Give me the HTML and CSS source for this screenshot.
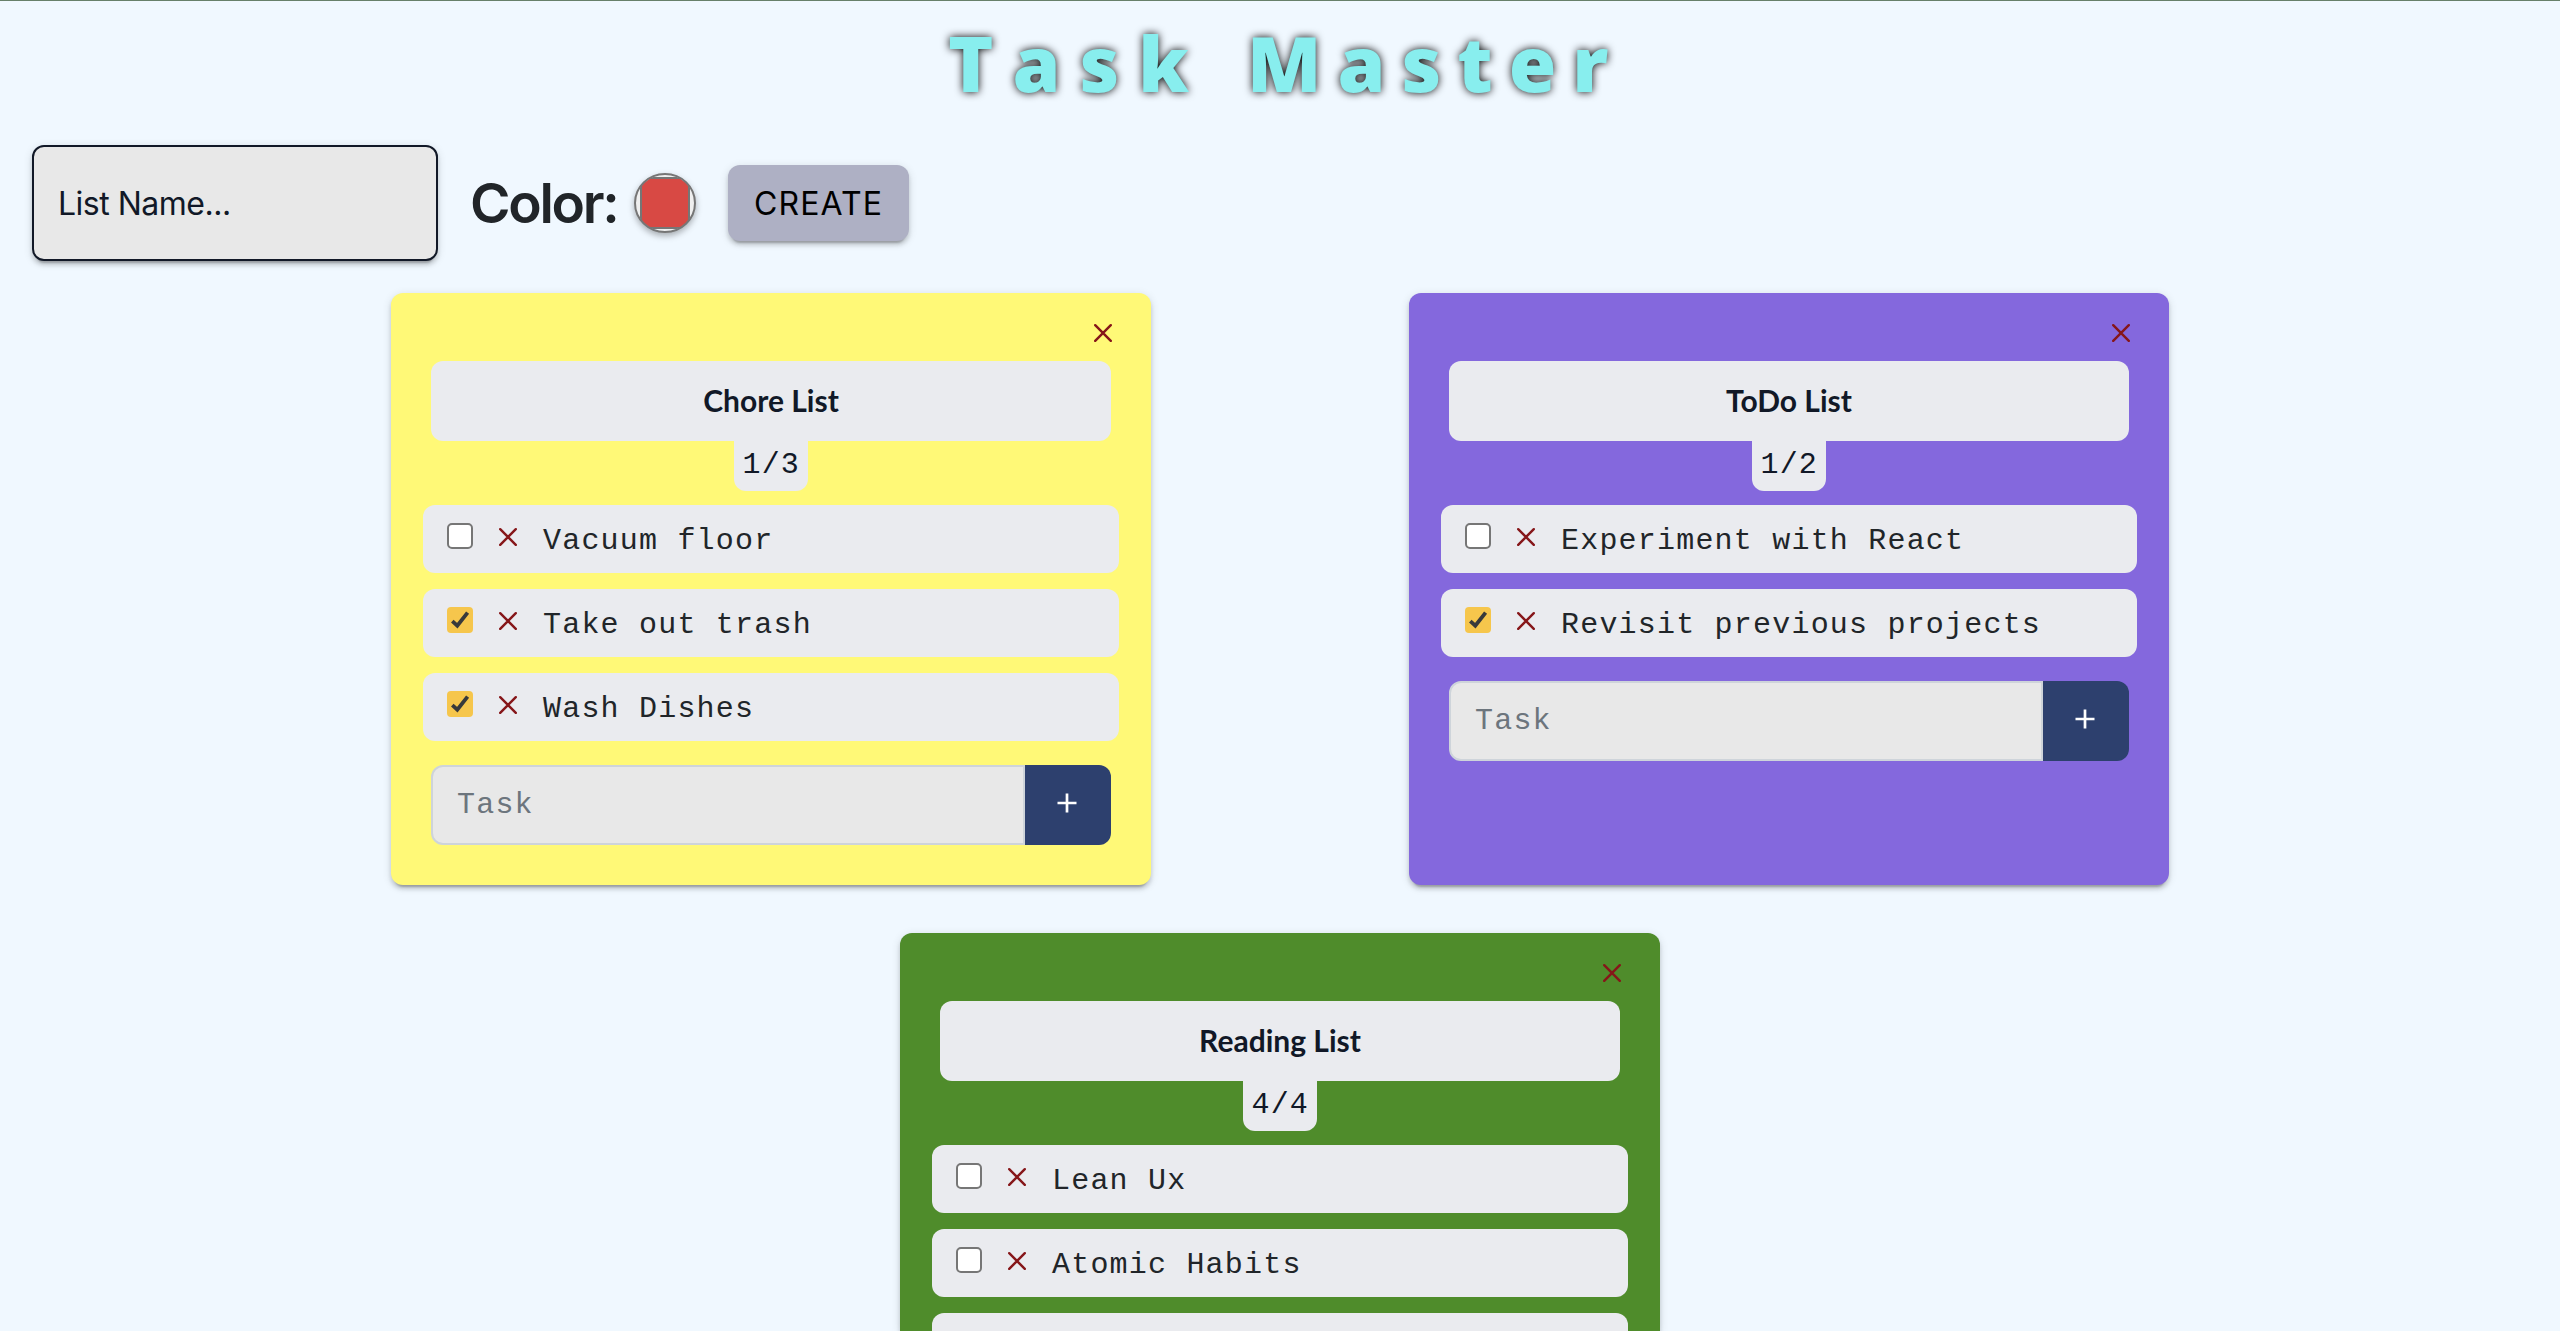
FILE: index.html
```html
<!DOCTYPE html>
<html lang="en">
<head>
<meta charset="utf-8">
<title>Task Master</title>
<link rel="stylesheet" href="styles.css">
</head>
<body>
<svg class="defs" width="0" height="0">
  <symbol id="x" viewBox="0 0 18 18"><path d="M1.2 1.2 16.8 16.8M16.8 1.2 1.2 16.8" fill="none" stroke="currentColor" stroke-width="2.4" stroke-linecap="round"/></symbol>
  <symbol id="plus" viewBox="0 0 20 20"><path d="M10 .5V19.5M.5 10H19.5" fill="none" stroke="currentColor" stroke-width="2.7"/></symbol>
  <symbol id="check" viewBox="0 0 26 26"><rect width="26" height="26" rx="4" fill="#f6c64c"/><path d="M5.3 14.2 10.3 18.7 20.6 5.6" fill="none" stroke="#38393b" stroke-width="3.8"/></symbol>
  <symbol id="box" viewBox="0 0 26 26"><rect x="1" y="1" width="24" height="24" rx="4" fill="#fff" stroke="#767676" stroke-width="2"/></symbol>
</svg>
<h1 class="title">Task <span class="second">Master</span></h1>
<form class="create-form">
  <div class="name-input"><span>List Name...</span></div>
  <div class="color-label"><span>Color:</span></div>
  <svg class="swatch" viewBox="0 0 62 60">
    <defs><clipPath id="round"><ellipse cx="31" cy="30" rx="29.5" ry="28.5"/></clipPath></defs>
    <ellipse cx="31" cy="30" rx="30" ry="29" fill="#efefef"/>
    <g clip-path="url(#round)"><rect x="7" y="5" width="48" height="50" fill="#d84944" stroke="#767676" stroke-width="2"/></g>
    <path d="M17 6.200 A28 27 0 0 0 8 15V45A28 27 0 0 0 17 54H46A28 27 0 0 0 54 45V15A28 27 0 0 0 46 6.200Z" fill="#d84944"/>
    <ellipse cx="31" cy="30" rx="30" ry="29" fill="none" stroke="#767676" stroke-width="2"/>
  </svg>
  <div class="create-btn"><span>CREATE</span></div>
</form>
<main class="lists">
  <section class="card yellow">
    <svg class="close"><use href="#x"/></svg>
    <h2 class="card-title"><span>Chore List</span></h2>
    <div class="count">1/3</div>
    <ul class="tasks">
      <li><svg class="cb"><use href="#box"/></svg><svg class="del"><use href="#x"/></svg><span>Vacuum floor</span></li>
      <li><svg class="cb"><use href="#check"/></svg><svg class="del"><use href="#x"/></svg><span>Take out trash</span></li>
      <li><svg class="cb"><use href="#check"/></svg><svg class="del"><use href="#x"/></svg><span>Wash Dishes</span></li>
    </ul>
    <div class="add"><div class="task-input"><span>Task</span></div><div class="add-btn"><svg class="plus"><use href="#plus"/></svg></div></div>
  </section>
  <section class="card purple">
    <svg class="close"><use href="#x"/></svg>
    <h2 class="card-title"><span>ToDo List</span></h2>
    <div class="count">1/2</div>
    <ul class="tasks">
      <li><svg class="cb"><use href="#box"/></svg><svg class="del"><use href="#x"/></svg><span>Experiment with React</span></li>
      <li><svg class="cb"><use href="#check"/></svg><svg class="del"><use href="#x"/></svg><span>Revisit previous projects</span></li>
    </ul>
    <div class="add"><div class="task-input"><span>Task</span></div><div class="add-btn"><svg class="plus"><use href="#plus"/></svg></div></div>
  </section>
  <section class="card green">
    <svg class="close"><use href="#x"/></svg>
    <h2 class="card-title"><span>Reading List</span></h2>
    <div class="count">4/4</div>
    <ul class="tasks">
      <li><svg class="cb"><use href="#box"/></svg><svg class="del"><use href="#x"/></svg><span>Lean Ux</span></li>
      <li><svg class="cb"><use href="#box"/></svg><svg class="del"><use href="#x"/></svg><span>Atomic Habits</span></li>
      <li class="cut"></li>
    </ul>
  </section>
</main>
</body>
</html>
```
FILE: styles.css
```css
* { box-sizing: border-box; }
html { height: 100%; overflow: hidden; }
body {
  margin: 0;
  height: 1331px;
  overflow: hidden;
  border-top: 1px solid #67806a;
  background: #f0f8ff;
  color: #212529;
  font-family: Inter, sans-serif;
}
svg { display: block; flex: none; }
.defs { display: none; }
.title {
  margin: 0;
  height: 144px;
  padding: 16px 0 0 948px;
  font: 800 77px/92px "Open Sans", sans-serif;
  letter-spacing: 19px;
  white-space: nowrap;
  color: #88eeee;
  text-shadow: 0 0 8px #000;
}
.second { letter-spacing: 16px; }
.create-form {
  display: flex;
  align-items: center;
  height: 116px;
  padding-left: 32px;
}
.name-input {
  width: 406px;
  height: 116px;
  padding: 0 0 0 24px;
  border: 2px solid #111827;
  border-radius: 12px;
  background: #e8e8e8;
  color: #111827;
  font-size: 32px;
  line-height: 114px;
  letter-spacing: -0.5px;
  box-shadow: 0 6px 2px -4px rgba(0,0,0,.2), 0 4px 4px rgba(0,0,0,.14), 0 2px 10px rgba(0,0,0,.12);
}
.color-label {
  width: 164px;
  margin-left: 32px;
  font-size: 55px;
  font-weight: 600;
  line-height: 116px;
  letter-spacing: -2.3px;
}
.swatch {
  width: 62px;
  height: 60px;
  filter: drop-shadow(0 3px 3px rgba(0,0,0,.3));
}
.create-btn {
  width: 181px;
  height: 76px;
  margin-left: 32px;
  border-radius: 12px;
  background: #aeb0c4;
  color: #000;
  font-size: 32px;
  line-height: 77px;
  letter-spacing: 1.1px;
  text-align: center;
  box-shadow: 0 6px 2px -4px rgba(0,0,0,.2), 0 4px 4px rgba(0,0,0,.14), 0 2px 10px rgba(0,0,0,.12);
}
.lists {
  display: flex;
  flex-wrap: wrap;
  justify-content: center;
  gap: 48px 258px;
  padding-top: 32px;
}
.card {
  display: flex;
  flex-direction: column;
  width: 760px;
  min-height: 592px;
  padding: 31px 32px 40px;
  border-radius: 12px;
  box-shadow: 0 6px 2px -4px rgba(0,0,0,.2), 0 4px 4px rgba(0,0,0,.14), 0 2px 10px rgba(0,0,0,.12);
}
.yellow { background: #fff977; }
.purple { background: #8468dd; }
.green {
  height: 398px;
  min-height: 0;
  padding-bottom: 0;
  border-radius: 12px 12px 0 0;
  background: #4f8c2b;
}
.close {
  width: 18px;
  height: 18px;
  margin: 0 7px 19px auto;
  color: #861619;
}
.card-title {
  height: 80px;
  margin: 0 8px;
  border-radius: 12px;
  background: #eaebef;
  color: #111827;
  font: 700 30px/79px Lato, sans-serif;
  text-align: center;
}
.count {
  align-self: center;
  height: 50px;
  padding: 0 7.5px 0 8px;
  border-radius: 0 0 12px 12px;
  background: #eaebef;
  color: #111827;
  font: 30px/48px "Liberation Mono", monospace;
  letter-spacing: 1.2px;
}
.tasks {
  display: flex;
  flex-direction: column;
  gap: 16px;
  margin: 14px 0 24px;
  padding: 0;
  list-style: none;
}
.tasks li {
  display: flex;
  align-items: flex-start;
  height: 68px;
  padding: 18px 24px 0;
  border-radius: 12px;
  background: #eaebef;
  font: 30px/37px "Liberation Mono", monospace;
  letter-spacing: 1.2px;
}
.tasks .cut {
  height: 18px;
  padding: 0;
  border-radius: 12px 12px 0 0;
}
.green .tasks { margin-bottom: 0; }
.cb { width: 26px; height: 26px; }
.del { width: 18px; height: 18px; margin: 5px 26px 0; color: #861619; }
.add { display: flex; height: 80px; margin: 0 8px; }
.task-input {
  flex: 1;
  padding-left: 24px;
  border: 2px solid #ced4da;
  border-radius: 12px 0 0 12px;
  background: #e8e8e8;
  color: #6c757d;
  font: 30px/76px "Liberation Mono", monospace;
  letter-spacing: 1.2px;
}
.add-btn {
  display: flex;
  align-items: center;
  justify-content: center;
  width: 86px;
  padding: 0 2px 4px 0;
  border-radius: 0 12px 12px 0;
  background: #2d406e;
  color: #fff;
}
.plus { width: 20px; height: 20px; }
```
